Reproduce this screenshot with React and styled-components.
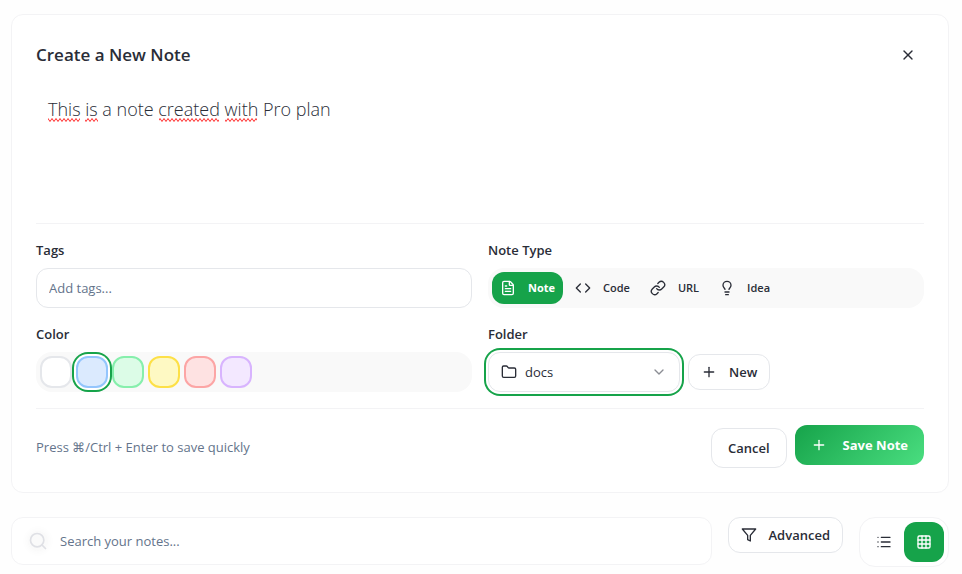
import { useState } from 'react';
import styled, { createGlobalStyle } from 'styled-components';
import {
  ChevronDown,
  Code,
  FileText,
  Folder,
  Grid3x3,
  Lightbulb,
  Link,
  List,
  Plus,
  Search,
  X,
} from 'lucide-react';

const GlobalStyle = createGlobalStyle`
  * {
    box-sizing: border-box;
  }

  body {
    margin: 0;
    background: #fefefe;
    color: #2a2d37;
    font-family: "Segoe UI", "Open Sans", "Noto Sans", sans-serif;
    font-size: 13px;
    line-height: 20px;
  }

  button, input, select, textarea {
    font: inherit;
    color: inherit;
    margin: 0;
  }

  button, select, input[type="radio"] {
    cursor: pointer;
  }
`;

const Page = styled.main`
  display: flex;
  flex-direction: column;
  gap: 24px;
  padding: 14px 13px 7px 11px;
`;

const Card = styled.form`
  padding: 24px;
  background: #fff;
  border: 1px solid #f3f3f5;
  border-radius: 12px;
`;

const CardHeader = styled.div`
  display: flex;
  align-items: center;
  justify-content: space-between;
  margin-bottom: 16px;
`;

const Title = styled.h2`
  margin: 0;
  font-size: 17px;
  font-weight: 600;
  line-height: 28px;
`;

const CloseButton = styled.button`
  display: flex;
  align-items: center;
  justify-content: center;
  width: 32px;
  height: 32px;
  padding: 0;
  border: none;
  border-radius: 8px;
  background: transparent;
`;

const Editor = styled.div`
  position: relative;
  display: flex;
  padding-bottom: 16px;
  border-bottom: 1px solid #f3f3f5;
`;

const NoteText = styled.textarea`
  width: 100%;
  height: 120px;
  padding: 8px 12px;
  border: none;
  outline: none;
  resize: none;
  background: transparent;
  font-size: 18px;
  font-weight: 300;
  line-height: 28px;
`;

const SpellMarks = styled.svg`
  position: absolute;
  top: 30px;
  left: 12px;
  pointer-events: none;
`;

const Fields = styled.div`
  display: grid;
  grid-template-columns: 1fr 1fr;
  gap: 16px;
  padding: 16px 0;
  border-bottom: 1px solid #f3f3f5;
`;

const Field = styled.div`
  display: flex;
  flex-direction: column;
  gap: 8px;
`;

const Label = styled.label`
  font-weight: 600;
`;

const TagInput = styled.input`
  width: 100%;
  height: 40px;
  padding: 0 12px;
  border: 1px solid #e5e7eb;
  border-radius: 12px;
  background: #fff;

  &::placeholder {
    color: #64748b;
    opacity: 1;
  }
`;

const Tray = styled.div`
  display: flex;
  gap: 4px;
  height: 40px;
  padding: 4px;
  border-radius: 16px;
  background: #f9f9f9;
`;

const TypeButton = styled.button`
  display: flex;
  align-items: center;
  gap: 12px;
  padding: 0 8px;
  border: none;
  border-radius: 12px;
  background: ${(props) => (props.$active ? '#16a34a' : 'transparent')};
  color: ${(props) => (props.$active ? '#fff' : 'inherit')};
  font-size: 11px;
  font-weight: ${(props) => (props.$active ? 700 : 600)};
`;

const Swatch = styled.input`
  appearance: none;
  width: 32px;
  height: 32px;
  border: 2px solid ${(props) => props.$border};
  border-radius: 12px;
  background: ${(props) => props.$fill};

  &:checked {
    box-shadow: 0 0 0 2px #fff, 0 0 0 4px #16a34a;
  }
`;

const FolderRow = styled.div`
  display: flex;
  align-items: center;
  gap: 8px;
`;

const SelectBox = styled.div`
  display: flex;
  align-items: center;
  gap: 8px;
  width: 192px;
  height: 40px;
  padding: 0 12px;
  border: 1px solid #e5e7eb;
  border-radius: 12px;
  background: #fff;
  box-shadow: 0 0 0 2px #fff, 0 0 0 4px #16a34a;
`;

const FolderSelect = styled.select`
  flex: 1;
  min-width: 0;
  padding: 0;
  border: none;
  outline: none;
  appearance: none;
  background: transparent;
`;

const OutlineButton = styled.button`
  display: flex;
  align-items: center;
  gap: 12px;
  height: ${(props) => (props.$large ? '40px' : '36px')};
  padding: 0 ${(props) => (props.$large ? '16px' : '12px')};
  border: 1px solid #e5e7eb;
  border-radius: 12px;
  background: #fff;
  font-weight: 600;
`;

const CardFooter = styled.div`
  display: flex;
  align-items: center;
  justify-content: space-between;
  padding-top: 16px;
`;

const Hint = styled.p`
  margin: 0;
  color: #64748b;
`;

const Actions = styled.div`
  display: flex;
  align-items: flex-end;
  gap: 8px;
  min-height: 43px;
`;

const SaveButton = styled.button`
  display: flex;
  align-items: center;
  align-self: flex-start;
  gap: 16px;
  height: 40px;
  padding: 0 16px;
  border: none;
  border-radius: 12px;
  background: linear-gradient(135deg, #16a34a, #4ade80);
  color: #fff;
  font-weight: 700;
`;

const Toolbar = styled.div`
  display: flex;
  align-items: flex-start;
  gap: 16px;
`;

const SearchBox = styled.label`
  display: flex;
  flex: 1;
  align-items: center;
  gap: 12px;
  height: 48px;
  padding: 0 16px;
  border: 1px solid #f3f3f5;
  border-radius: 12px;
  background: #fff;
`;

const SearchIcon = styled.span`
  display: flex;
  border-radius: 50%;
  background: #fafafa;
  box-shadow: 0 0 6px 2px #fafafa;
  color: #dfe0e5;
`;

const SearchInput = styled.input`
  flex: 1;
  min-width: 0;
  padding: 0;
  border: none;
  outline: none;
  background: transparent;

  &::placeholder {
    color: #64748b;
    opacity: 1;
  }
`;

const ViewToggle = styled.div`
  display: flex;
  padding: 4px;
  border: 1px solid #f3f3f5;
  border-radius: 16px;
  background: #fff;
`;

const ViewButton = styled.button`
  display: flex;
  align-items: center;
  justify-content: center;
  width: 40px;
  height: 40px;
  padding: 0;
  border: none;
  border-radius: 12px;
  background: ${(props) => (props.$active ? '#16a34a' : 'transparent')};
  color: ${(props) => (props.$active ? '#fff' : 'inherit')};
`;

const noteTypes = [
  { name: 'Note', Icon: FileText },
  { name: 'Code', Icon: Code },
  { name: 'URL', Icon: Link },
  { name: 'Idea', Icon: Lightbulb },
];

const colors = [
  { name: 'White', fill: '#ffffff', border: '#e5e7eb' },
  { name: 'Blue', fill: '#dbeafe', border: '#93c5fd' },
  { name: 'Green', fill: '#dcfce7', border: '#86efac' },
  { name: 'Yellow', fill: '#fef9c3', border: '#fde047' },
  { name: 'Red', fill: '#fee2e2', border: '#fca5a5' },
  { name: 'Purple', fill: '#f3e8ff', border: '#d8b4fe' },
];

// start and width of each misspelled word
const misspelled = [
  [0, 32],
  [37, 13],
  [111, 60],
  [177, 32],
];

const FunnelIcon = () => (
  <svg width="16" height="16" viewBox="0 0 24 24" fill="none" stroke="currentColor" strokeWidth="2" strokeLinecap="round" strokeLinejoin="round" aria-hidden="true">
    <polygon points="22 3 2 3 10 12.46 10 19 14 21 14 12.46 22 3" />
  </svg>
);

const App = () => {
  const [text, setText] = useState('This is a note created with Pro plan');
  const [type, setType] = useState('Note');
  const [color, setColor] = useState('Blue');
  const [view, setView] = useState('grid');

  return (
    <Page>
      <GlobalStyle />
      <Card onSubmit={(e) => e.preventDefault()}>
        <CardHeader>
          <Title>Create a New Note</Title>
          <CloseButton type="button" aria-label="Close">
            <X size={16} />
          </CloseButton>
        </CardHeader>

        <Editor>
          <NoteText
            aria-label="Note"
            spellCheck={false}
            value={text}
            onChange={(e) => setText(e.target.value)}
          />
          <SpellMarks width="280" height="6" aria-hidden="true">
            <defs>
              <pattern id="squiggle" width="4" height="6" patternUnits="userSpaceOnUse">
                <path d="M-2 4.5 L0 1.5 L2 4.5 L4 1.5 L6 4.5" fill="none" stroke="#ff2a2a" strokeWidth="1" />
              </pattern>
            </defs>
            {misspelled.map(([x, width]) => (
              <rect key={x} x={x} y="0" width={width} height="6" fill="url(#squiggle)" />
            ))}
          </SpellMarks>
        </Editor>

        <Fields>
          <Field>
            <Label htmlFor="tags">Tags</Label>
            <TagInput id="tags" placeholder="Add tags..." />
          </Field>

          <Field>
            <Label as="span" id="type-label">Note Type</Label>
            <Tray role="group" aria-labelledby="type-label">
              {noteTypes.map(({ name, Icon }) => (
                <TypeButton
                  key={name}
                  type="button"
                  aria-pressed={type === name}
                  $active={type === name}
                  onClick={() => setType(name)}
                >
                  <Icon size={16} />
                  {name}
                </TypeButton>
              ))}
            </Tray>
          </Field>

          <Field>
            <Label as="span" id="color-label">Color</Label>
            <Tray role="radiogroup" aria-labelledby="color-label">
              {colors.map((c) => (
                <Swatch
                  key={c.name}
                  type="radio"
                  name="color"
                  aria-label={c.name}
                  checked={color === c.name}
                  onChange={() => setColor(c.name)}
                  $fill={c.fill}
                  $border={c.border}
                />
              ))}
            </Tray>
          </Field>

          <Field>
            <Label htmlFor="folder">Folder</Label>
            <FolderRow>
              <SelectBox>
                <Folder size={16} />
                <FolderSelect id="folder">
                  <option>docs</option>
                </FolderSelect>
                <ChevronDown size={16} color="#8b8d94" />
              </SelectBox>
              <OutlineButton type="button">
                <Plus size={16} />
                New
              </OutlineButton>
            </FolderRow>
          </Field>
        </Fields>

        <CardFooter>
          <Hint>Press ⌘/Ctrl + Enter to save quickly</Hint>
          <Actions>
            <OutlineButton type="button" $large>Cancel</OutlineButton>
            <SaveButton type="submit">
              <Plus size={16} />
              Save Note
            </SaveButton>
          </Actions>
        </CardFooter>
      </Card>

      <Toolbar>
        <SearchBox>
          <SearchIcon>
            <Search size={20} />
          </SearchIcon>
          <SearchInput type="search" aria-label="Search your notes" placeholder="Search your notes..." />
        </SearchBox>
        <OutlineButton type="button">
          <FunnelIcon />
          Advanced
        </OutlineButton>
        <ViewToggle>
          <ViewButton type="button" aria-label="List view" $active={view === 'list'} onClick={() => setView('list')}>
            <List size={16} />
          </ViewButton>
          <ViewButton type="button" aria-label="Grid view" $active={view === 'grid'} onClick={() => setView('grid')}>
            <Grid3x3 size={16} />
          </ViewButton>
        </ViewToggle>
      </Toolbar>
    </Page>
  );
};

export default App;
